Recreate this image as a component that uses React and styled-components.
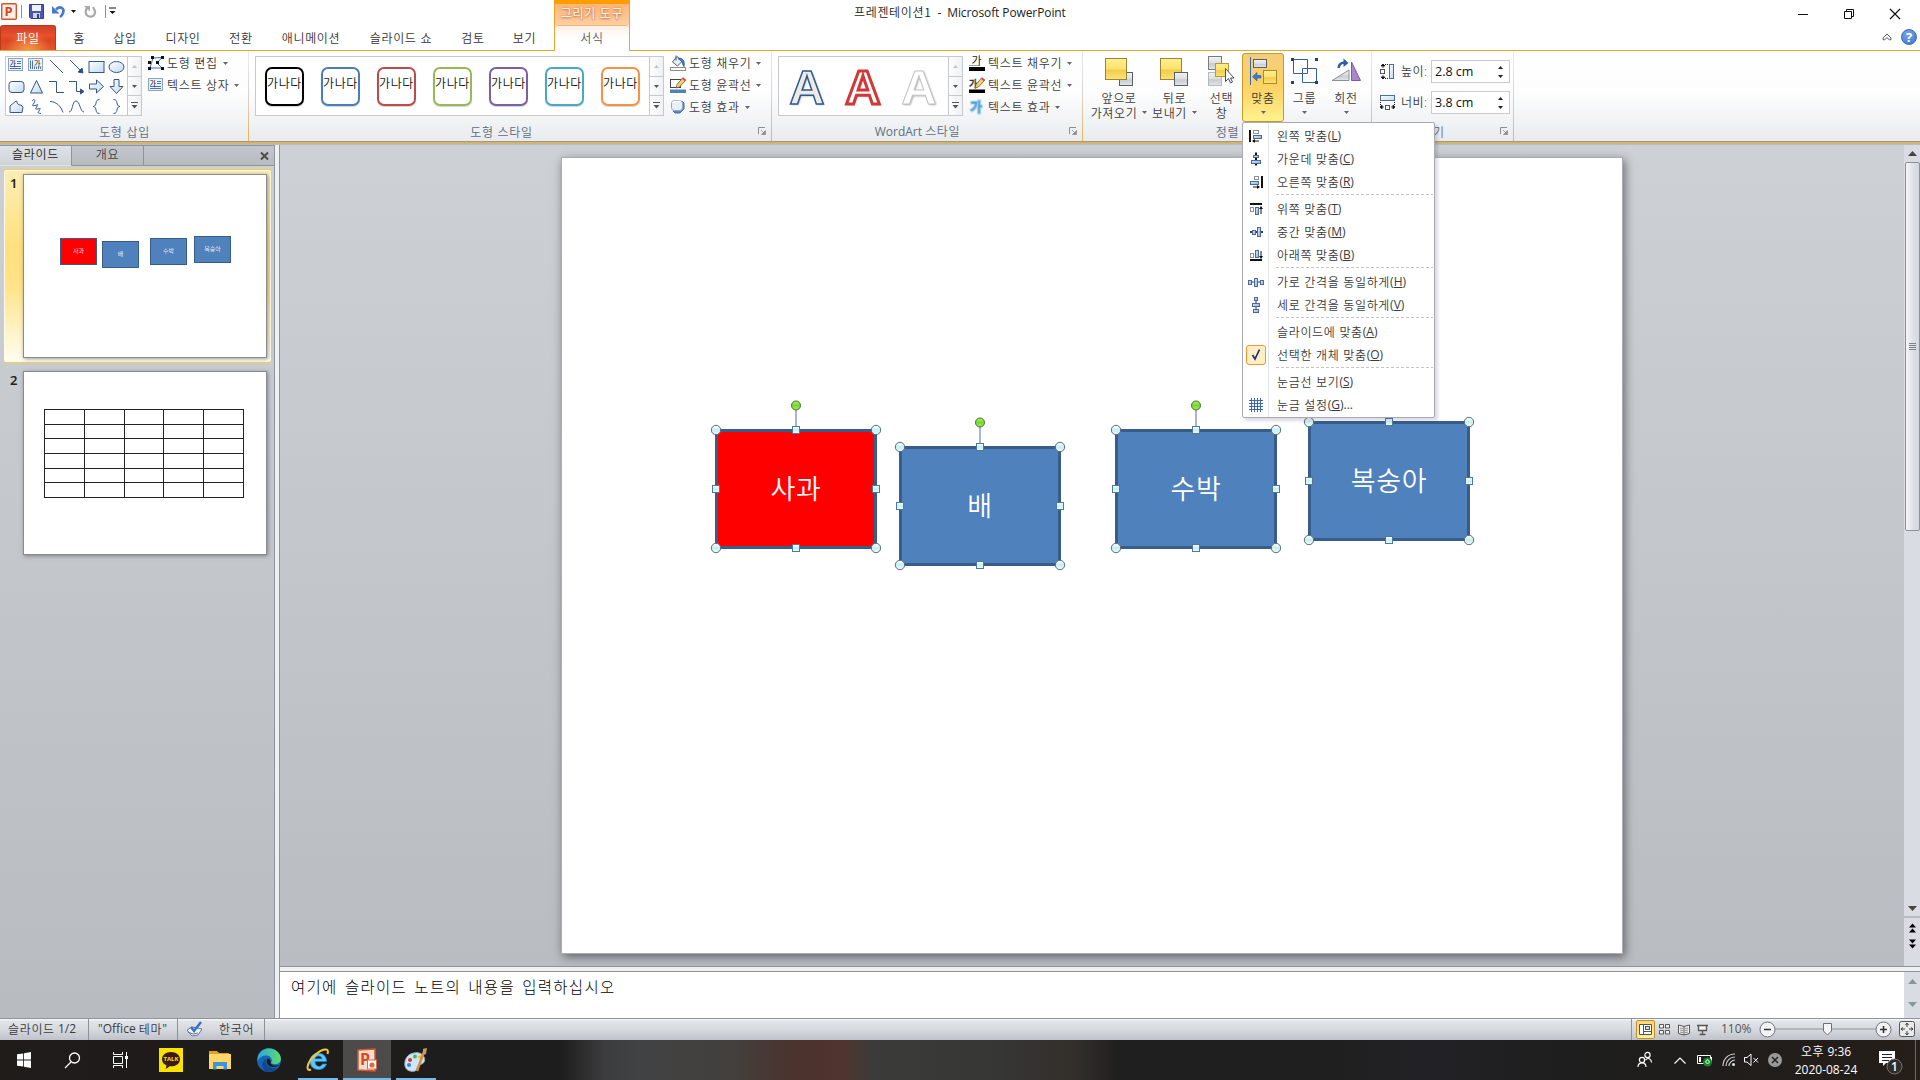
import React from 'react';
import styled, { createGlobalStyle, css } from 'styled-components';

const GlobalStyle = createGlobalStyle`
  * {
    box-sizing: border-box;
  }

  body {
    margin: 0;
    overflow: hidden;
    font-family: 'Open Sans', 'Noto Sans CJK KR', sans-serif;
    font-size: 12px;
    line-height: 16px;
    color: #3b3b3b;
  }

  svg {
    display: block;
    flex: none;
    overflow: visible;
  }
`;

const Window = styled.div`
  width: 1920px;
  height: 1080px;
  display: flex;
  flex-direction: column;
  background: #fff;
`;

const Ko = styled.span`
  font-family: 'Noto Sans CJK KR', sans-serif;
  font-weight: 350;
  letter-spacing: 0.65px;
  word-spacing: 0.6px;
  white-space: nowrap;
`;

/* ---------- title bar ---------- */

const TopArea = styled.header`
  position: relative;
  height: 51px;
  display: flex;
  flex-direction: column;
  border-bottom: 1px solid #f2a32c;
`;

const TitleBar = styled.div`
  height: 25px;
  display: flex;
  align-items: center;
  justify-content: space-between;
`;

const QuickAccess = styled.div`
  width: 554px;
  display: flex;
  align-items: center;
  padding: 0 0 2px 1px;
`;

const QuickDivider = styled.i`
  width: 1px;
  height: 13px;
  background: #8f8f8f;
  margin: 0 ${(p) => p.$right || 0}px 0 ${(p) => p.$left || 0}px;
`;

const DocTitle = styled.div`
  flex: 1;
  padding: 1px 0 0 300px;
  color: #1d1d1d;
  letter-spacing: -0.1px;
  white-space: pre;
`;

const WindowButtons = styled.div`
  display: flex;
  align-items: center;
  padding: 4px 17px 0 0;
  gap: 30px;
`;

const TabRow = styled.nav`
  height: 26px;
  display: flex;
  align-items: stretch;
`;

const Tab = styled.div`
  width: ${(p) => p.$width}px;
  display: flex;
  align-items: center;
  justify-content: center;
  padding-top: 1px;
  color: #333;
`;

const FileTab = styled(Tab)`
  color: #fff;
  border: 1px solid #b93a17;
  border-bottom: none;
  border-radius: 3px 3px 0 0;
  background:
    radial-gradient(ellipse at 50% 110%, #f7a04a 0%, rgba(247, 160, 74, 0) 60%),
    linear-gradient(#d0402b 0%, #e8502b 40%, #dc4424 60%, #e2552e 100%);
`;

const ContextTab = styled.div`
  position: absolute;
  left: 554px;
  top: 0;
  width: 76px;
  height: 51px;
  border-top: 4px solid #ff9d00;
  border-left: 1px solid #f2a32c;
  border-right: 1px solid #f2a32c;
  background: #fff;
`;

const ContextTitle = styled.div`
  height: 21px;
  padding-top: 1px;
  text-align: center;
  color: #fff;
  text-shadow: 0 0 3px #c2703a, 0 1px 2px #c2703a;
  background: linear-gradient(#fbb676, #fdcfa5);
`;

const ContextLabel = styled.div`
  height: 26px;
  padding-top: 4px;
  text-align: center;
  color: #555c68;
  border-top: 1px solid #f2b765;
  border-radius: 3px 3px 0 0;
  background: linear-gradient(#fdf0e8, #fff 50%);
`;

const RibbonCorner = styled.div`
  margin-left: auto;
  display: flex;
  align-items: center;
  gap: 9px;
  padding: 0 3px 1px 0;
`;

const HelpBadge = styled.div`
  width: 16px;
  height: 16px;
  border-radius: 50%;
  border: 1px solid #3b6cbc;
  background: radial-gradient(circle at 40% 30%, #79a6ea, #3c73cf);
  color: #fff;
  font-weight: bold;
  font-size: 13px;
  line-height: 14px;
  text-align: center;
`;

/* ---------- ribbon ---------- */

const Ribbon = styled.section`
  position: relative;
  z-index: 5;
  height: 94px;
  display: flex;
  background: linear-gradient(#fff 0%, #fdfdfd 45%, #f1f3f5 75%, #e9ecef 96%);
  border-bottom: 1px solid #b9bcc0;
  box-shadow: inset 0 -1px #ceb47d, inset 0 -2px #d9b25d, inset 0 -3px #a39883;
`;

const Group = styled.div`
  position: relative;
  width: ${(p) => p.$width}px;
  height: 91px;
  display: flex;
  flex-direction: column;

  &::after {
    content: '';
    position: absolute;
    right: 0;
    top: 0;
    width: 1px;
    height: 90px;
    background: linear-gradient(#ebebeb, #d6d4d0 50%, #ecb34d);
  }
`;

const GroupBody = styled.div`
  height: 71px;
  display: flex;
  padding-left: ${(p) => p.$left}px;
`;

const GroupFooter = styled.div`
  height: 19px;
  display: flex;
  align-items: center;
  justify-content: center;
  color: #606b7c;
  padding-right: ${(p) => p.$shift || 0}px;
`;

const Launcher = styled.div`
  position: absolute;
  right: 6px;
  bottom: 7px;
`;

const Gallery = styled.div`
  margin-top: 5px;
  width: ${(p) => p.$width}px;
  height: 60px;
  display: flex;
  background: #fff;
  border: 1px solid #c6c9ce;
`;

const GalleryScroll = styled.div`
  width: 14px;
  margin-left: auto;
  display: flex;
  flex-direction: column;
  border-left: 1px solid #c6c9ce;
  background: linear-gradient(90deg, #fdfdfd, #eff1f3);
`;

const ScrollStep = styled.div`
  flex: 1;
  display: flex;
  align-items: center;
  justify-content: center;

  & + & {
    border-top: 1px solid #c6c9ce;
  }
`;

const ShapeGrid = styled.div`
  display: grid;
  grid-template-columns: repeat(6, 20px);
  grid-template-rows: repeat(3, 20px);
  place-items: center;
  margin-top: -1px;
`;

const StyleRow = styled.div`
  flex: 1;
  display: flex;
  gap: 17px;
  padding: 10px 0 0 9px;
`;

const StyleSwatch = styled.div`
  width: 39px;
  height: 39px;
  display: flex;
  justify-content: center;
  padding-top: 6px;
  border: 2px solid ${(p) => p.$color};
  border-radius: 7px;
  box-shadow: 0 1px 1px rgba(0, 0, 0, 0.18);
  color: #111;
  white-space: nowrap;
`;

const WordArtRow = styled.div`
  flex: 1;
  display: flex;
  align-items: center;
  gap: 22px;
  padding: 2px 0 0 11px;
`;

const WordArtLetter = styled.span`
  width: 34px;
  display: flex;
  justify-content: center;
  font-family: 'Liberation Sans', sans-serif;
  font-weight: bold;
  font-size: 49px;
  line-height: 56px;
  color: ${(p) => p.$fill};
  -webkit-text-stroke: ${(p) => p.$stroke}px ${(p) => p.$line};
  text-shadow: 1px 1px 2px rgba(0, 0, 0, 0.35);
`;

const CommandList = styled.div`
  margin-left: ${(p) => p.$left}px;
  padding-top: ${(p) => p.$top || 1}px;
`;

const CommandRow = styled.div`
  height: 22px;
  display: flex;
  align-items: center;
  gap: 3px;
  white-space: nowrap;
`;

const CommandArrow = styled.span`
  margin-left: 2px;
`;

const LargeButton = styled.div`
  position: relative;
  width: ${(p) => p.$width}px;
  height: 69px;
  margin-top: 2px;
  padding-top: 4px;
  display: flex;
  flex-direction: column;
  align-items: center;
  border: 1px solid transparent;
  border-radius: 3px;
  line-height: 15px;

  ${(p) =>
    p.$active &&
    css`
      border-color: #c29b29;
      background: linear-gradient(#f4cd7a, #fed163 45%, #ffda6f 65%, #fff391);
    `}
`;

const LargeIcon = styled.div`
  height: 32px;
  display: flex;
  align-items: flex-start;
`;

const LargeCaption = styled.div`
  height: 15px;
  display: flex;
  align-items: center;
  gap: 5px;
  white-space: nowrap;
`;

const SizeRow = styled.label`
  height: 31px;
  display: flex;
  align-items: center;
`;

const SizeName = styled.span`
  width: 30px;
  margin-left: 6px;
  font-weight: 350;
  letter-spacing: 0.4px;
  white-space: nowrap;
`;

const SizeBox = styled.div`
  width: 79px;
  height: 23px;
  display: flex;
  align-items: center;
  justify-content: space-between;
  padding: 0 6px 0 3px;
  background: #fff;
  border: 1px solid #c9cbce;
  color: #111;
  font-size: 12.5px;
`;

/* ---------- align menu ---------- */

const Menu = styled.div`
  position: absolute;
  left: -1px;
  top: 68px;
  z-index: 10;
  width: 193px;
  padding: 1px 1px 1px 0;
  background: linear-gradient(90deg, #fff 25px, #e2e4e7 25px, #e2e4e7 26px, #fff 26px);
  border: 1px solid #a7abb0;
  border-radius: 2px;
  box-shadow: 3px 3px 3px rgba(70, 60, 110, 0.18);
`;

const MenuItem = styled.div`
  height: 23px;
  display: flex;
  align-items: center;
  white-space: nowrap;
`;

const MenuIcon = styled.div`
  width: 26px;
  display: flex;
  justify-content: center;
  margin-right: 8px;
`;

const MenuCheck = styled.div`
  width: 20px;
  height: 20px;
  display: flex;
  align-items: center;
  justify-content: center;
  border: 1px solid #f29536;
  border-radius: 3px;
  background: #fdeec3;
`;

const MenuLine = styled.div`
  height: 4px;
  margin-left: 33px;
  background: repeating-linear-gradient(90deg, #c5c5c5 0 3px, transparent 3px 5px) 0 1px / 100% 1px no-repeat;
`;

/* ---------- work area ---------- */

const WorkArea = styled.main`
  height: 873px;
  display: flex;
`;

const SidePane = styled.aside`
  width: 275px;
  border-right: 1px solid #8e949b;
  background: linear-gradient(#cdd0d5, #b8bbc0);
`;

const PaneTabs = styled.div`
  height: 21px;
  display: flex;
  border-top: 1px solid #8e949b;
  background: linear-gradient(#c3c7cd, #b7bbc0);
`;

const PaneTab = styled.div`
  width: ${(p) => p.$width}px;
  text-align: center;
  border-right: 1px solid #8e949b;
  border-bottom: 1px solid ${(p) => (p.$active ? 'transparent' : '#8e949b')};
  background: ${(p) => (p.$active ? 'linear-gradient(#dfe2e6, #cfd2d7)' : 'none')};
  color: ${(p) => (p.$active ? '#222' : '#444')};
`;

const PaneClose = styled.div`
  flex: 1;
  display: flex;
  align-items: center;
  justify-content: flex-end;
  padding-right: 5px;
  border-bottom: 1px solid #8e949b;
`;

const ThumbRow = styled.div`
  width: 269px;
  height: 194px;
  margin: ${(p) => p.$top}px 0 0 3px;
  padding: 4px 0 0 4px;
  display: flex;
  border: 1px solid transparent;
  border-radius: 3px;

  ${(p) =>
    p.$active &&
    css`
      border-color: #f7cd55;
      box-shadow: inset 0 0 0 1px #fffbe8;
      background: linear-gradient(#fdeeb4, #ffe07f 40%, #ffe388 60%, #fffdf0 100%);
    `}
`;

const ThumbNumber = styled.div`
  width: 15px;
  padding: 1px 0 0 2px;
  font-family: 'Noto Sans', sans-serif;
  font-weight: 600;
  font-size: 13px;
  color: #222;
`;

const Thumb = styled.div`
  position: relative;
  width: 244px;
  height: 184px;
  background: #fff;
  border: 1px solid #888c92;
  box-shadow: 1px 1px 4px rgba(60, 60, 60, 0.5);
`;

const ThumbShape = styled.div`
  position: absolute;
  left: ${(p) => p.$x}px;
  top: ${(p) => p.$y}px;
  width: 37px;
  height: 27px;
  display: flex;
  align-items: center;
  justify-content: center;
  padding-bottom: 2px;
  background: ${(p) => p.$fill};
  border: 1px solid #385d8a;
  color: rgba(255, 255, 255, 0.85);
  font-size: 6px;
  line-height: 8px;
`;

const ThumbTable = styled.div`
  width: 200px;
  height: 89px;
  margin: 37px 0 0 20px;
  display: grid;
  grid-template-columns: repeat(5, 1fr);
  grid-template-rows: repeat(6, 1fr);
  border: 1px solid #222;
  border-width: 1px 0 0 1px;
`;

const ThumbCell = styled.div`
  border: 1px solid #222;
  border-width: 0 1px 1px 0;
`;

const Splitter = styled.div`
  width: 4px;
  background: #eef0f2;
`;

const EditorColumn = styled.div`
  flex: 1;
  display: flex;
  flex-direction: column;
  border-left: 1px solid #8e949b;
`;

const CanvasRow = styled.div`
  flex: none;
  height: 822px;
  display: flex;
  border-bottom: 1px solid #8e949b;
`;

const Canvas = styled.div`
  flex: 1;
  padding: 12px 0 0 281px;
  background: linear-gradient(#cdd0d4, #b9bcc0);
`;

const Slide = styled.div`
  position: relative;
  width: 1062px;
  height: 797px;
  background: #fff;
  border: 1px solid #a9adb3;
  box-shadow: 2px 3px 9px rgba(50, 55, 60, 0.65);
`;

const SlideShape = styled.div`
  position: absolute;
  left: ${(p) => p.$x}px;
  top: ${(p) => p.$y}px;
  width: 162px;
  height: 120px;
  display: flex;
  align-items: center;
  justify-content: center;
  padding-bottom: 2px;
  background: ${(p) => p.$fill};
  border: 3px solid #385d8a;
  color: #fff;
  font-family: 'Noto Sans CJK KR', sans-serif;
  font-weight: 350;
  font-size: 27px;
  line-height: 40px;
  letter-spacing: 0.6px;
`;

const Selection = styled.svg`
  position: absolute;
  left: -12px;
  top: -36px;
`;

const ScrollBar = styled.div`
  width: 16px;
  display: flex;
  flex-direction: column;
  align-items: center;
  background: #d9dce2;
`;

const ScrollArrow = styled.div`
  flex: none;
  height: ${(p) => p.$height}px;
  display: flex;
  align-items: center;
`;

const ScrollThumb = styled.div`
  width: 15px;
  height: 369px;
  margin-bottom: auto;
  display: flex;
  flex-direction: column;
  align-items: center;
  justify-content: center;
  gap: 1px;
  border: 1px solid #8b919b;
  border-radius: 2px;
  background: linear-gradient(90deg, #f4f5f8, #dcdfe5 60%, #d3d7df);
`;

const Grip = styled.i`
  width: 7px;
  height: 1px;
  background: #7b828c;
`;

const ScrollExtras = styled.div`
  width: 16px;
  height: 50px;
  padding-top: 5px;
  display: flex;
  flex-direction: column;
  align-items: center;
  gap: 6px;
  border-top: 2px solid #b9bcc2;
`;

const NotesGap = styled.div`
  flex: none;
  height: 4px;
  background: #eef0f2;
`;

const NotesRow = styled.div`
  flex: 1;
  display: flex;
  border-top: 1px solid #8e949b;
`;

const Notes = styled.div`
  flex: 1;
  padding: 4px 0 0 11px;
  background: #fff;
  color: #000;
  font-size: 15.500px;
  line-height: 20px;
`;

const NotesText = styled.span`
  font-family: 'Noto Sans CJK KR', sans-serif;
  font-weight: 300;
  letter-spacing: 1.3px;
  word-spacing: 2.5px;
`;

/* ---------- status bar ---------- */

const StatusBar = styled.footer`
  height: 22px;
  display: flex;
  align-items: center;
  border-top: 1px solid #8e949b;
  background: linear-gradient(#fafbfc 0, #e1e4e8 2px, #d6d9de 50%, #bfc3c9);
`;

const StatusCell = styled.div`
  width: ${(p) => p.$width}px;
  height: 21px;
  display: flex;
  align-items: center;
  padding: 0 0 1px ${(p) => p.$left}px;
  border-right: 1px solid #8d9299;
  white-space: nowrap;
`;

const StatusRight = styled.div`
  margin-left: auto;
  height: 21px;
  width: 289px;
  display: flex;
  align-items: center;
  padding-left: 4px;
  border-left: 1px solid #8d9299;
`;

const ViewButton = styled.div`
  width: 19px;
  height: 19px;
  display: flex;
  align-items: center;
  justify-content: center;
  border: 1px solid ${(p) => (p.$active ? '#c58e2b' : 'transparent')};
  border-radius: 2px;
  background: ${(p) => (p.$active ? 'linear-gradient(#fcd77b, #fff09a)' : 'none')};
`;

const ZoomValue = styled.span`
  width: 41px;
  margin-left: 9px;
  padding-bottom: 1px;
  color: #555;
`;

/* ---------- task bar ---------- */

const TaskBar = styled.div`
  height: 40px;
  display: flex;
  background: linear-gradient(
    90deg,
    #1f1c1a 0,
    #1d1d1d 560px,
    #3d3d3f 605px,
    #414243 640px,
    #43403d 735px,
    #4c322d 795px,
    #4f352e 845px,
    #3b3b39 872px,
    #363634 1000px,
    #332e2a 1075px,
    #1f1f1f 1120px,
    #1f1f1f 1320px,
    #222226 1430px,
    #1e1e1e 1560px,
    #1f1d1b 1700px,
    #251e19
  );
`;

const TaskSlot = styled.div`
  width: ${(p) => p.$width || 48}px;
  height: 40px;
  display: flex;
  align-items: center;
  justify-content: center;
  background: ${(p) => (p.$active ? '#4d4b4a' : 'none')};
  box-shadow: ${(p) => (p.$open ? 'inset 0 -2px #76b9ed' : 'none')};
  margin: 0 ${(p) => p.$gap || 0}px 0 ${(p) => p.$before || 0}px;
`;

const Tray = styled.div`
  margin-left: auto;
  width: 283px;
  display: flex;
  align-items: center;
`;

const TrayItem = styled.div`
  margin-left: ${(p) => p.$left}px;
`;

const Clock = styled.div`
  width: 72px;
  margin-left: 8px;
  text-align: center;
  color: #fff;
  line-height: 18px;
`;

const ShowDesktop = styled.i`
  width: 5px;
  height: 40px;
  margin-left: auto;
  border-left: 1px solid #6b6866;
`;

/* ---------- drawings ---------- */

const Arrow = ({ w = 5, up, color = '#666' }) => (
  <svg width={w} height={Math.ceil(w / 2)} viewBox={`0 0 ${w} ${Math.ceil(w / 2)}`}>
    <path d={up ? `M0 ${Math.ceil(w / 2)}H${w}L${w / 2} 0Z` : `M0 0H${w}L${w / 2} ${Math.ceil(w / 2)}Z`} fill={color} />
  </svg>
);

const LauncherIcon = () => (
  <svg width="8" height="8" viewBox="0 0 8 8">
    <path d="M0.5 7V0.5H7" fill="none" stroke="#8b8f95" />
    <path d="M3 3L6 6M7.5 3.5V7.5H3.5Z" stroke="#8b8f95" fill="#8b8f95" strokeWidth="0.8" />
  </svg>
);

const ScrollSteps = () => (
  <GalleryScroll>
    <ScrollStep><Arrow up color="#c3c3c3" /></ScrollStep>
    <ScrollStep><Arrow color="#555" /></ScrollStep>
    <ScrollStep>
      <svg width="7" height="7" viewBox="0 0 7 7">
        <path d="M0 .5H7" stroke="#555" />
        <path d="M0.5 3H6.5L3.5 6.5Z" fill="#555" />
      </svg>
    </ScrollStep>
  </GalleryScroll>
);

const TextBoxIcon = ({ vertical }) => (
  <svg width="16" height="14" viewBox="0 0 16 14">
    <rect x=".5" y=".5" width="14" height="12" fill="#eaf1f9" stroke="#8ba3c2" />
    <path
      d={vertical ? 'M2.500 2.500V11M4.500 2.500V11M6.500 8.500V11M8.500 8.500V11M10.500 8.500V11M12.500 8.500V11' : 'M9 3.500H13M9 5.500H13M2 8.500H13M2 10.500H13'}
      stroke="#4c76ab"
    />
    <text x={vertical ? 6 : 1.5} y="7.500" fontSize="7" fill="#111">가</text>
  </svg>
);

const shapeIcons = [
  <TextBoxIcon />,
  <TextBoxIcon vertical />,
  <path d="M2 2L15 15" />,
  <g><path d="M2 2L13 13" /><path d="M15 15L10 14L14 10Z" fill="#2c4a75" /></g>,
  <rect x="1" y="3.500" width="15" height="11" fill="url(#shapeFill)" />,
  <ellipse cx="8.500" cy="9" rx="7.500" ry="5.500" fill="url(#shapeFill)" />,
  <rect x="1" y="3.500" width="15" height="11" rx="3" fill="url(#shapeFill)" />,
  <path d="M8.500 2.500L14.500 15H2.500Z" fill="url(#shapeFill)" />,
  <path d="M1 3.500H8.500V14.500H16" />,
  <g><path d="M1 3.500H8.500V13.500H13" /><path d="M16 13.500L12.500 11V16Z" fill="#2c4a75" /></g>,
  <path d="M1.500 6H8.500V2L15.500 8.500L8.500 15V11H1.500Z" fill="url(#shapeFill)" />,
  <path d="M6 1.500H11V8.500H15L8.500 15.500L2 8.500H6Z" fill="url(#shapeFill)" />,
  <path d="M2 14.500V8L8 3L9 3.500C9 6 10.500 7 13 7L15 9.500L14 14.500Z" fill="url(#shapeFill)" />,
  <path d="M4 3C6 0 8 2 6 5S4 8 7 7.500S10 5 9 8S6 11 9 11S13 9 11.500 12S9 15 13 15.500" />,
  <path d="M2 3.500C8 3.500 13 8 15 14.500" />,
  <path d="M1 14C5 14 4 3 8 3S12 14 16 14" />,
  <path d="M11.500 1.500C6 1.500 10 8 5 8.500C10 9 6 15.500 11.500 15.500" />,
  <path d="M5.500 1.500C11 1.500 7 8 12 8.500C7 9 11 15.500 5.500 15.500" />,
];

const ShapeIcon = ({ children }) => (
  <svg width="17" height="17" viewBox="0 0 17 17" fill="none" stroke="#35578a">
    {children}
  </svg>
);

const Defs = styled.svg`
  position: absolute;
`;

const SharedDefs = () => (
  <Defs width="0" height="0">
    <defs>
      <linearGradient id="shapeFill" x1="0" y1="0" x2="1" y2="1">
        <stop offset="0" stopColor="#fff" />
        <stop offset="1" stopColor="#c2daf0" />
      </linearGradient>
      <linearGradient id="barFill" x1="0" y1="0" x2="1" y2="1">
        <stop offset="0" stopColor="#dce9f8" />
        <stop offset="1" stopColor="#8db0dc" />
      </linearGradient>
      <linearGradient id="yellowFill" x1="0" y1="0" x2="0" y2="1">
        <stop offset="0" stopColor="#fdf08e" />
        <stop offset="0.5" stopColor="#fbe26c" />
        <stop offset="0.55" stopColor="#f0cb4e" />
        <stop offset="1" stopColor="#fbe573" />
      </linearGradient>
      <linearGradient id="grayFill" x1="0" y1="0" x2="0" y2="1">
        <stop offset="0" stopColor="#f2f3f4" />
        <stop offset="0.5" stopColor="#dcdee1" />
        <stop offset="0.55" stopColor="#c8cbcf" />
        <stop offset="1" stopColor="#e4e6e9" />
      </linearGradient>
      <linearGradient id="handleFill" x1="0" y1="0" x2="0" y2="1">
        <stop offset="0" stopColor="#fff" />
        <stop offset="0.5" stopColor="#c5eef0" />
        <stop offset="1" stopColor="#f0fdfd" />
      </linearGradient>
      <linearGradient id="greenFill" x1="0" y1="0" x2="0" y2="1">
        <stop offset="0" stopColor="#b4f56c" />
        <stop offset="0.5" stopColor="#74d92b" />
        <stop offset="1" stopColor="#a4f25b" />
      </linearGradient>
      <linearGradient id="edgeFill" x1="0" y1="0" x2="1" y2="0">
        <stop offset="0" stopColor="#2ba8dd" />
        <stop offset="1" stopColor="#5ddc6b" />
      </linearGradient>
    </defs>
  </Defs>
);

const EditShapeIcon = () => (
  <svg width="16" height="14" viewBox="0 0 16 14">
    <path d="M5 2L14 1.500L9 7L14 12H2Z" fill="none" stroke="#3f6fb5" />
    <path d="M3 0h3v3h-3zM13 0h3v3h-3zM8 5h3v3h-3zM0 5h3v3h-3zM0 11h3v3h-3zM13 11h3v3h-3z" fill="#111" />
  </svg>
);

const FillIcon = () => (
  <svg width="16" height="16" viewBox="0 0 16 16">
    <path d="M2.500 7L7 1.500L12.500 6L7.500 11Z" fill="#e8f0fa" stroke="#4c5f7d" />
    <path d="M6 0.500V5.500M8 3.500C12 2.500 15 5 14 11.500C12.500 9.500 12.500 7.500 11.500 6Z" stroke="#2f5ea3" fill="#4f7fc6" />
    <rect x=".5" y="12.500" width="15" height="3" fill="#fff" stroke="#8c8c8c" />
  </svg>
);

const PencilIcon = ({ text, bar }) => (
  <svg width="16" height="16" viewBox="0 0 16 16">
    {text ? (
      <text x="0" y="9.500" fontSize="9" fill="#fff" stroke="#333" strokeWidth=".6">가</text>
    ) : (
      <rect x=".5" y="2.500" width="10" height="8" fill="#fff" stroke="#444" />
    )}
    <path d="M6 11L7 7.500L12.500 1L15.500 3.500L9.500 10Z" fill="#f2d16b" stroke="#6d5a2e" strokeWidth=".8" />
    <path d="M12.500 1L15.500 3.500" stroke="#c9504b" strokeWidth="2" />
    <rect y="12.500" width="16" height="3.500" fill={bar} />
  </svg>
);

const EffectIcon = () => (
  <svg width="16" height="16" viewBox="0 0 16 16">
    <path d="M3 12L5 14H10L14 10V4L12 2" fill="#5f86c0" stroke="#486ea9" />
    <rect x="1.500" y="1.500" width="11" height="10" rx="3" fill="#e9f0fa" stroke="#8fa9cd" />
    <path d="M3 4C3 3 4 2.500 5 2.500H11" stroke="#fff" strokeWidth="1.500" fill="none" />
  </svg>
);

const TextFillIcon = () => (
  <svg width="16" height="16" viewBox="0 0 16 16">
    <text x="2.500" y="10" fontSize="11" fill="#222">가</text>
    <path d="M0 10.500H11" stroke="#777" strokeWidth=".7" />
    <rect y="12" width="16" height="4" fill="#000" />
  </svg>
);

const TextEffectIcon = () => (
  <svg width="16" height="16" viewBox="0 0 16 16">
    <text x="1.500" y="12.500" fontSize="12" fill="#fff" stroke="#a9d6f5" strokeWidth="3">가</text>
    <text x="1.500" y="12.500" fontSize="12" fill="#fff" stroke="#4f9bd6" strokeWidth=".8">가</text>
  </svg>
);

const BringFrontIcon = () => (
  <svg width="29" height="29" viewBox="0 0 29 29">
    <rect x="14.500" y="14.500" width="13" height="13" fill="url(#grayFill)" stroke="#5b6068" />
    <rect x=".5" y=".5" width="21" height="21" fill="url(#yellowFill)" stroke="#9a8438" />
  </svg>
);

const SendBackIcon = () => (
  <svg width="29" height="29" viewBox="0 0 29 29">
    <rect x=".5" y=".5" width="21" height="21" fill="url(#yellowFill)" stroke="#9a8438" />
    <rect x="14.500" y="14.500" width="13" height="13" fill="url(#grayFill)" stroke="#5b6068" />
  </svg>
);

const SelectPaneIcon = () => (
  <svg width="28" height="31" viewBox="0 0 28 31">
    <rect x=".5" y="-1.500" width="13" height="13" fill="url(#grayFill)" stroke="#777c84" />
    <rect x=".5" y="14.500" width="13" height="13" fill="url(#grayFill)" stroke="#b6b9be" />
    <rect x="7.500" y="5.500" width="13" height="13" fill="url(#yellowFill)" stroke="#b39a3d" />
    <path d="M17.500 10.500V23.500L20.500 20.500L22.500 25L24.500 24L22.500 20H26Z" fill="#fff" stroke="#44536b" />
  </svg>
);

const AlignIcon = () => (
  <svg width="29" height="30" viewBox="0 0 29 30">
    <path d="M1.500 -1V27" stroke="#3768b0" />
    <rect x="4.500" y="1.500" width="13" height="8" fill="url(#grayFill)" stroke="#5b6068" />
    <rect x="14.500" y="12.500" width="13" height="13" fill="url(#yellowFill)" stroke="#a58c33" />
    <path d="M12 17.500V20H8V23L3.500 18.700L8 14.500V17.500Z" fill="#3d79d1" stroke="#2a5ba8" strokeWidth=".6" />
  </svg>
);

const GroupIcon = () => (
  <svg width="27" height="28" viewBox="0 0 27 28">
    <path d="M2.500 1.500H16.500V15.500H2.500ZM11.500 10.500H25.500V24.500H11.500Z" fill="none" stroke="#35609f" />
    <path d="M0 0h3v3h-3zM24 0h3v3h-3zM0 23h3v3h-3zM24 23h3v3h-3z" fill="#1f3f78" />
  </svg>
);

const RotateIcon = () => (
  <svg width="31" height="25" viewBox="0 0 31 25">
    <path d="M1 22.500L18 12V22.500Z" fill="url(#grayFill)" stroke="#8a9099" />
    <path d="M20.500 4V22.500H29.500Z" fill="#a988c9" stroke="#7a5da0" />
    <path d="M7.500 10C8 6 10 4.500 14 4.500" fill="none" stroke="#2c5ea6" strokeWidth="2.500" />
    <path d="M12.500 0.500L17.500 5L12.500 9Z" fill="#2c5ea6" />
  </svg>
);

const HeightIcon = () => (
  <svg width="15" height="17" viewBox="0 0 15 17">
    <rect x="9.500" y="1.500" width="4" height="14" fill="url(#shapeFill)" stroke="#4c6f9f" />
    <rect x=".5" y="6.500" width="4" height="4" fill="#fff" stroke="#555" />
    <path d="M3 1L1 3H5ZM3 16L1 14H5ZM3 1V5M3 12V16" fill="#111" stroke="#111" strokeWidth=".8" />
    <path d="M5 1.500H8M5 15.500H8" stroke="#111" strokeDasharray="1 1" />
  </svg>
);

const WidthIcon = () => (
  <svg width="15" height="15" viewBox="0 0 15 15">
    <rect x=".5" y=".5" width="14" height="5" fill="url(#shapeFill)" stroke="#4c6f9f" />
    <rect x="5.500" y="10.500" width="4" height="4" fill="#fff" stroke="#555" />
    <path d="M0 12L2 10V14ZM15 12L13 10V14ZM1 12H4M11 12H14" fill="#111" stroke="#111" strokeWidth=".8" />
    <path d="M.5 7V10M14.500 7V10" stroke="#111" strokeDasharray="1 1" />
  </svg>
);

const Spinner = () => (
  <svg width="5" height="14" viewBox="0 0 5 14">
    <path d="M0 4H5L2.500 1ZM0 10H5L2.500 13Z" fill="#222" />
  </svg>
);

const box = { fill: 'url(#barFill)', stroke: '#4a6a98' };
const greyBox = { fill: '#fff', stroke: '#8b929c' };

const menuDrawings = {
  left: <g><path d="M2 2V14" stroke="#111" strokeWidth="2" /><rect x="5.500" y="2.500" width="5" height="3" {...greyBox} /><rect x="5.500" y="7.500" width="8" height="3" {...box} /><path d="M5 13H11" stroke="#111" /><path d="M4 13L7 11V15Z" fill="#111" /></g>,
  center: <g><path d="M8 1.500V14.500" stroke="#111" strokeWidth="2" /><rect x="5.500" y="4.500" width="5" height="2" {...box} /><rect x="3.500" y="9.500" width="9" height="3" {...box} /></g>,
  right: <g><path d="M14 2V14" stroke="#111" strokeWidth="2" /><rect x="6.500" y="2.500" width="4" height="3" {...greyBox} /><rect x="2.500" y="7.500" width="8" height="3" {...box} /><path d="M5 13H11" stroke="#111" /><path d="M12 13L9 11V15Z" fill="#111" /></g>,
  top: <g><path d="M2 3H14" stroke="#111" strokeWidth="2" /><rect x="2.500" y="6.500" width="3" height="4" {...greyBox} /><rect x="7.500" y="6.500" width="3" height="7" {...box} /><path d="M13 7V13" stroke="#111" /><path d="M13 5L11 8H15Z" fill="#111" /></g>,
  middle: <g><path d="M2 8H15" stroke="#111" strokeWidth="1.600" /><rect x="4.500" y="6.500" width="3" height="4" {...box} /><rect x="9.500" y="3.500" width="3" height="9" {...box} /></g>,
  bottom: <g><path d="M2 13H14" stroke="#111" strokeWidth="2" /><rect x="2.500" y="6.500" width="3" height="4" {...greyBox} /><rect x="7.500" y="3.500" width="3" height="7" {...box} /><path d="M13 4V9" stroke="#111" /><path d="M13 12L11 9H15Z" fill="#111" /></g>,
  horizontal: <g><path d="M3 8H14" stroke="#333" /><rect x=".5" y="6.500" width="3" height="4" {...box} /><rect x="6.500" y="4.500" width="3" height="8" {...box} /><rect x="12.500" y="6.500" width="3" height="4" {...box} /></g>,
  vertical: <g><path d="M8 3V14" stroke="#333" /><rect x="6.500" y=".5" width="3" height="3" {...box} /><rect x="4.500" y="6.500" width="7" height="3" {...box} /><rect x="5.500" y="12.500" width="5" height="3" {...box} /></g>,
  grid: <path d="M3.500 1V15M6.500 1V15M9.500 1V15M12.500 1V15M1 3.500H15M1 6.500H15M1 9.500H15M1 12.500H15" stroke="#3c67b5" />,
};

const MenuDrawing = ({ name }) => (
  <svg width="16" height="16" viewBox="0 0 16 16" fill="none">
    {menuDrawings[name]}
  </svg>
);

const SelectionFrame = () => (
  <Selection width="180" height="160" viewBox="0 0 180 160">
    <path d="M90 12V34" stroke="#4c6f9f" />
    <circle cx="90" cy="9.500" r="4.500" fill="url(#greenFill)" stroke="#47683a" />
    {[[10, 34], [170, 34], [10, 152], [170, 152]].map(([x, y]) => (
      <circle key={`${x}-${y}`} cx={x} cy={y} r="4.700" fill="url(#handleFill)" stroke="#5c6a75" />
    ))}
    {[[90, 34], [90, 152], [10, 93], [170, 93]].map(([x, y]) => (
      <rect key={`${x}-${y}`} x={x - 3.5} y={y - 3.5} width="7" height="7" fill="url(#handleFill)" stroke="#4f779b" />
    ))}
  </Selection>
);

/* ---------- data ---------- */

const tabs = [
  ['홈', 46], ['삽입', 46], ['디자인', 70], ['전환', 46], ['애니메이션', 94],
  ['슬라이드 쇼', 86], ['검토', 58], ['보기', 45],
];

const outlineColors = ['#000', '#4a7ebb', '#be4b48', '#98b954', '#7d60a0', '#46aac5', '#f69240'];

const menuItems = [
  { icon: 'left', label: '왼쪽 맞춤', hotkey: 'L' },
  { icon: 'center', label: '가운데 맞춤', hotkey: 'C' },
  { icon: 'right', label: '오른쪽 맞춤', hotkey: 'R' },
  { line: true },
  { icon: 'top', label: '위쪽 맞춤', hotkey: 'T' },
  { icon: 'middle', label: '중간 맞춤', hotkey: 'M' },
  { icon: 'bottom', label: '아래쪽 맞춤', hotkey: 'B' },
  { line: true },
  { icon: 'horizontal', label: '가로 간격을 동일하게', hotkey: 'H' },
  { icon: 'vertical', label: '세로 간격을 동일하게', hotkey: 'V' },
  { line: true },
  { label: '슬라이드에 맞춤', hotkey: 'A' },
  { label: '선택한 개체 맞춤', hotkey: 'O', checked: true },
  { line: true },
  { label: '눈금선 보기', hotkey: 'S' },
  { icon: 'grid', label: '눈금 설정', hotkey: 'G', more: true },
];

const shapes = [
  { label: '사과', x: 153, y: 271, tx: 36, ty: 63, fill: '#ff0000' },
  { label: '배', x: 337, y: 288, tx: 78, ty: 66, fill: '#4f81bd' },
  { label: '수박', x: 553, y: 271, tx: 126, ty: 63, fill: '#4f81bd' },
  { label: '복숭아', x: 746, y: 263, tx: 170, ty: 61, fill: '#4f81bd' },
];

/* ---------- parts ---------- */

const Command = ({ icon, children }) => (
  <CommandRow>
    {icon}
    <Ko>{children}</Ko>
    <CommandArrow><Arrow /></CommandArrow>
  </CommandRow>
);

const AlignMenu = () => (
  <Menu>
    {menuItems.map((item, i) =>
      item.line ? (
        <MenuLine key={i} />
      ) : (
        <MenuItem key={i}>
          <MenuIcon>
            {item.icon && <MenuDrawing name={item.icon} />}
            {item.checked && (
              <MenuCheck>
                <svg width="10" height="13" viewBox="0 0 10 13">
                  <path d="M1.500 7L4 11L8.500 1.500" fill="none" stroke="#1c2f7c" strokeWidth="1.700" />
                </svg>
              </MenuCheck>
            )}
          </MenuIcon>
          <Ko>{item.label}</Ko>
          <span>(<u>{item.hotkey}</u>){item.more && '...'}</span>
        </MenuItem>
      )
    )}
  </Menu>
);

const Header = () => (
  <TopArea>
    <TitleBar>
      <QuickAccess>
        <svg width="16" height="17" viewBox="0 0 16 17">
          <rect x=".7" y=".7" width="14.600" height="15.600" rx="1" fill="#fdeee6" stroke="#d3532a" strokeWidth="1.400" />
          <text x="3.500" y="13" fontSize="13" fontWeight="bold" fill="#d3461b">P</text>
        </svg>
        <QuickDivider $left={4} $right={7} />
        <svg width="15" height="15" viewBox="0 0 15 15">
          <path d="M.5 .5H14.500V14.500H2L.5 13Z" fill="#4c57b5" stroke="#343c8c" />
          <rect x="3" y="1" width="9" height="6" fill="#eef2fb" />
          <rect x="4" y="9" width="7" height="5" fill="#ccd3e8" />
          <rect x="8" y="10" width="2" height="4" fill="#343c8c" />
        </svg>
        <TrayItem $left={8}>
          <svg width="14" height="14" viewBox="0 0 14 14">
            <path d="M4 5.500C8 1.500 13 4 11 9C10.500 10.500 9.500 12 8 13" fill="none" stroke="#4879cf" strokeWidth="2.600" />
            <path d="M0 2V9.500H7.500Z" fill="#4879cf" />
          </svg>
        </TrayItem>
        <TrayItem $left={5}><Arrow color="#111" /></TrayItem>
        <TrayItem $left={8}>
          <svg width="13" height="13" viewBox="0 0 13 13">
            <path d="M4 2.500C1 4 1 9.500 4 11C8 13 11.500 10 11 6.500C10.800 5 10 4 9 2" fill="none" stroke="#a9a9a9" strokeWidth="2.200" />
            <path d="M0 1H6V6.500Z" fill="#a9a9a9" />
          </svg>
        </TrayItem>
        <QuickDivider $left={8} $right={3} />
        <svg width="7" height="8" viewBox="0 0 7 8"><path d="M0 1H7" stroke="#111" /><path d="M.5 4H6.500L3.500 7Z" fill="#111" /></svg>
      </QuickAccess>
      <DocTitle><Ko>프레젠테이션1</Ko>  -  Microsoft PowerPoint</DocTitle>
      <WindowButtons>
        <svg width="16" height="12" viewBox="0 0 16 12"><path d="M3 6.500H13" stroke="#111" /></svg>
        <svg width="16" height="12" viewBox="0 0 16 12">
          <path d="M3.500 3.500H10.500V10.500H3.500ZM5.500 3V1.500H12.500V8.500H11" fill="none" stroke="#111" />
        </svg>
        <svg width="16" height="12" viewBox="0 0 16 12"><path d="M3 1L13 11M13 1L3 11" stroke="#111" strokeWidth="1.200" /></svg>
      </WindowButtons>
    </TitleBar>
    <TabRow>
      <FileTab $width={56}><Ko>파일</Ko></FileTab>
      {tabs.map(([label, width]) => (
        <Tab key={label} $width={width}><Ko>{label}</Ko></Tab>
      ))}
      <RibbonCorner>
        <svg width="10" height="8" viewBox="0 0 10 8">
          <path d="M1 5L5 1L9 5V6.500L7.500 7L5 4.500L2.500 7L1 6.500Z" fill="#fff" stroke="#555" />
        </svg>
        <HelpBadge>?</HelpBadge>
      </RibbonCorner>
    </TabRow>
    <ContextTab>
      <ContextTitle><Ko>그리기 도구</Ko></ContextTitle>
      <ContextLabel><Ko>서식</Ko></ContextLabel>
    </ContextTab>
  </TopArea>
);

const FormatRibbon = () => (
  <Ribbon>
    <Group $width={249}>
      <GroupBody $left={5}>
        <Gallery $width={137}>
          <ShapeGrid>
            {shapeIcons.map((icon, i) => <ShapeIcon key={i}>{i < 2 ? <g stroke="none">{icon}</g> : icon}</ShapeIcon>)}
          </ShapeGrid>
          <ScrollSteps />
        </Gallery>
        <CommandList $left={6}>
          <Command icon={<EditShapeIcon />}>도형 편집</Command>
          <Command icon={<TextBoxIcon />}>텍스트 상자</Command>
        </CommandList>
      </GroupBody>
      <GroupFooter><Ko>도형 삽입</Ko></GroupFooter>
    </Group>
    <Group $width={523}>
      <GroupBody $left={6}>
        <Gallery $width={409}>
          <StyleRow>
            {outlineColors.map((color) => (
              <StyleSwatch key={color} $color={color}><Ko>가나다</Ko></StyleSwatch>
            ))}
          </StyleRow>
          <ScrollSteps />
        </Gallery>
        <CommandList $left={6}>
          <Command icon={<FillIcon />}>도형 채우기</Command>
          <Command icon={<PencilIcon bar="#4f81bd" />}>도형 윤곽선</Command>
          <Command icon={<EffectIcon />}>도형 효과</Command>
        </CommandList>
      </GroupBody>
      <GroupFooter $shift={18}><Ko>도형 스타일</Ko></GroupFooter>
      <Launcher><LauncherIcon /></Launcher>
    </Group>
    <Group $width={311}>
      <GroupBody $left={6}>
        <Gallery $width={185}>
          <WordArtRow>
            <WordArtLetter $fill="#f0ebdc" $stroke={1.5} $line="#2a5a9e">A</WordArtLetter>
            <WordArtLetter $fill="#fff" $stroke={3} $line="#cf3a38">A</WordArtLetter>
            <WordArtLetter $fill="#fff" $stroke={1} $line="#c4c4c4">A</WordArtLetter>
          </WordArtRow>
          <ScrollSteps />
        </Gallery>
        <CommandList $left={6}>
          <Command icon={<TextFillIcon />}>텍스트 채우기</Command>
          <Command icon={<PencilIcon text bar="#000" />}>텍스트 윤곽선</Command>
          <Command icon={<TextEffectIcon />}>텍스트 효과</Command>
        </CommandList>
      </GroupBody>
      <GroupFooter $shift={20}><span>WordArt <Ko>스타일</Ko></span></GroupFooter>
      <Launcher><LauncherIcon /></Launcher>
    </Group>
    <Group $width={289}>
      <GroupBody $left={7}>
        <LargeButton $width={58}>
          <LargeIcon><BringFrontIcon /></LargeIcon>
          <LargeCaption><Ko>앞으로</Ko></LargeCaption>
          <LargeCaption><Ko>가져오기</Ko><Arrow /></LargeCaption>
        </LargeButton>
        <LargeButton $width={53}>
          <LargeIcon><SendBackIcon /></LargeIcon>
          <LargeCaption><Ko>뒤로</Ko></LargeCaption>
          <LargeCaption><Ko>보내기</Ko><Arrow /></LargeCaption>
        </LargeButton>
        <LargeButton $width={41}>
          <LargeIcon><SelectPaneIcon /></LargeIcon>
          <LargeCaption><Ko>선택</Ko></LargeCaption>
          <LargeCaption><Ko>창</Ko></LargeCaption>
        </LargeButton>
        <LargeButton $width={42} $active>
          <LargeIcon><AlignIcon /></LargeIcon>
          <LargeCaption><Ko>맞춤</Ko></LargeCaption>
          <LargeCaption><Arrow /></LargeCaption>
          <AlignMenu />
        </LargeButton>
        <LargeButton $width={41}>
          <LargeIcon><GroupIcon /></LargeIcon>
          <LargeCaption><Ko>그룹</Ko></LargeCaption>
          <LargeCaption><Arrow /></LargeCaption>
        </LargeButton>
        <LargeButton $width={42}>
          <LargeIcon><RotateIcon /></LargeIcon>
          <LargeCaption><Ko>회전</Ko></LargeCaption>
          <LargeCaption><Arrow /></LargeCaption>
        </LargeButton>
      </GroupBody>
      <GroupFooter><Ko>정렬</Ko></GroupFooter>
    </Group>
    <Group $width={142}>
      <GroupBody $left={8}>
        <CommandList $left={0} $top={5}>
          <SizeRow>
            <HeightIcon />
            <SizeName>높이:</SizeName>
            <SizeBox>2.8 cm<Spinner /></SizeBox>
          </SizeRow>
          <SizeRow>
            <WidthIcon />
            <SizeName>너비:</SizeName>
            <SizeBox>3.8 cm<Spinner /></SizeBox>
          </SizeRow>
        </CommandList>
      </GroupBody>
      <GroupFooter $shift={20}><Ko>크기</Ko></GroupFooter>
      <Launcher><LauncherIcon /></Launcher>
    </Group>
  </Ribbon>
);

const SlidePane = () => (
  <SidePane>
    <PaneTabs>
      <PaneTab $width={72} $active><Ko>슬라이드</Ko></PaneTab>
      <PaneTab $width={72}><Ko>개요</Ko></PaneTab>
      <PaneClose>
        <svg width="9" height="8" viewBox="0 0 9 8"><path d="M1 .5L8 7.500M8 .5L1 7.500" stroke="#4c4c4c" strokeWidth="2" /></svg>
      </PaneClose>
    </PaneTabs>
    <ThumbRow $top={3} $active>
      <ThumbNumber>1</ThumbNumber>
      <Thumb>
        {shapes.map((s) => (
          <ThumbShape key={s.label} $x={s.tx} $y={s.ty} $fill={s.fill}>{s.label}</ThumbShape>
        ))}
      </Thumb>
    </ThumbRow>
    <ThumbRow $top={3}>
      <ThumbNumber>2</ThumbNumber>
      <Thumb>
        <ThumbTable>
          {Array.from({ length: 30 }, (_, i) => <ThumbCell key={i} />)}
        </ThumbTable>
      </Thumb>
    </ThumbRow>
  </SidePane>
);

const Editor = () => (
  <EditorColumn>
    <CanvasRow>
      <Canvas>
        <Slide>
          {shapes.map((s) => (
            <SlideShape key={s.label} $x={s.x} $y={s.y} $fill={s.fill}>
              {s.label}
              <SelectionFrame />
            </SlideShape>
          ))}
        </Slide>
      </Canvas>
      <ScrollBar>
        <ScrollArrow $height={17}><Arrow w={9} up color="#444" /></ScrollArrow>
        <ScrollThumb><Grip /><Grip /><Grip /><Grip /></ScrollThumb>
        <ScrollArrow $height={16}><Arrow w={9} color="#444" /></ScrollArrow>
        <ScrollExtras>
          <svg width="9" height="10" viewBox="0 0 9 10"><path d="M1 4.500L4.500 .5L8 4.500ZM1 9.500L4.500 5.500L8 9.500Z" fill="#000" /></svg>
          <svg width="9" height="10" viewBox="0 0 9 10"><path d="M1 .5L4.500 4.500L8 .5ZM1 5.500L4.500 9.500L8 5.500Z" fill="#000" /></svg>
        </ScrollExtras>
      </ScrollBar>
    </CanvasRow>
    <NotesGap />
    <NotesRow>
      <Notes><NotesText>여기에 슬라이드 노트의 내용을 입력하십시오</NotesText></Notes>
      <ScrollBar>
        <ScrollArrow $height={18}><Arrow w={9} up color="#8a9695" /></ScrollArrow>
        <ScrollArrow $height={28}><Arrow w={9} color="#8a9695" /></ScrollArrow>
      </ScrollBar>
    </NotesRow>
  </EditorColumn>
);

const Status = () => (
  <StatusBar>
    <StatusCell $width={89} $left={8}><Ko>슬라이드 </Ko>&nbsp;1/2</StatusCell>
    <StatusCell $width={89} $left={9}>"Office&nbsp;<Ko>테마</Ko>"</StatusCell>
    <StatusCell $width={87} $left={8}>
      <svg width="17" height="16" viewBox="0 0 17 16">
        <path d="M1 9L6 6L16 8L12 14L6 15Z" fill="#f2f5fa" stroke="#5d77a8" />
        <path d="M2 11L7 13L12 12" stroke="#5d77a8" fill="none" />
        <path d="M5 6L8 10L15 1" fill="none" stroke="#3c6cc9" strokeWidth="2.400" />
      </svg>
      <TrayItem $left={16}><Ko>한국어</Ko></TrayItem>
    </StatusCell>
    <StatusRight>
      <ViewButton $active>
        <svg width="13" height="11" viewBox="0 0 13 11">
          <path d="M.5 .5H12.500V10.500H.5ZM4.500 .5V10.500M4.500 7.500H12.500" fill="#fff" stroke="#555" />
          <rect x="6.500" y="2.500" width="4" height="3" fill="#ddd" stroke="#555" />
        </svg>
      </ViewButton>
      <ViewButton>
        <svg width="11" height="11" viewBox="0 0 11 11"><path d="M.5 .5H4.500V4H.5ZM6.500 .5H10.500V4H6.500ZM.5 6.500H4.500V10H.5ZM6.500 6.500H10.500V10H6.500Z" fill="#f2f2f2" stroke="#555" /></svg>
      </ViewButton>
      <ViewButton>
        <svg width="12" height="12" viewBox="0 0 12 12"><path d="M.5 1L6 2.500L11.500 1V9.500L6 11L.5 9.500ZM6 2.500V11" fill="#f2f2f2" stroke="#555" /><path d="M2 4L5 4.700M2 6L5 6.700M2 8L5 8.700M10 4L7 4.700M10 6L7 6.700M10 8L7 8.700" stroke="#777" strokeWidth=".8" /></svg>
      </ViewButton>
      <ViewButton>
        <svg width="11" height="12" viewBox="0 0 11 12"><path d="M0 1.500H11M1.500 1.500V6.500H9.500V1.500M5.500 6.500V10M2.500 10.500H8.500" fill="#f2f2f2" stroke="#555" strokeWidth="1.300" /></svg>
      </ViewButton>
      <ZoomValue>110%</ZoomValue>
      <TrayItem $left={-3}>
        <svg width="132" height="17" viewBox="0 0 132 17">
          <path d="M16 8H117" stroke="#8e949c" />
          <circle cx="8.500" cy="8.500" r="7.500" fill="#f2f3f4" stroke="#6d7178" />
          <circle cx="124.500" cy="8.500" r="7.500" fill="#f2f3f4" stroke="#6d7178" />
          <path d="M5 8.500H12M121 8.500H128M124.500 5V12" stroke="#333" strokeWidth="1.600" />
          <path d="M64.500 2.500H72.500V10L68.500 14L64.500 10Z" fill="#f4f5f6" stroke="#6d7178" />
        </svg>
      </TrayItem>
      <TrayItem $left={8}>
        <svg width="17" height="17" viewBox="0 0 17 17">
          <rect x=".5" y=".5" width="15" height="15" rx="2" fill="#e9eaec" stroke="#555" />
          <path d="M8 2V6M8 10V14M2 8H6M10 8H14M8 2L6.500 4M8 2L9.500 4M8 14L6.500 12M8 14L9.500 12M2 8L4 6.500M2 8L4 9.500M14 8L12 6.500M14 8L12 9.500" stroke="#444" fill="none" />
        </svg>
      </TrayItem>
    </StatusRight>
  </StatusBar>
);

const Tasks = () => (
  <TaskBar>
    <TaskSlot $width={47}>
      <svg width="14" height="16" viewBox="0 0 17 17" preserveAspectRatio="none"><path d="M0 2.500L7.500 1.500V8H0ZM8.500 1.400L17 0V8H8.500ZM0 9H7.500V15.500L0 14.500ZM8.500 9H17V17L8.500 15.700Z" fill="#fff" /></svg>
    </TaskSlot>
    <TaskSlot $before={1}>
      <svg width="17" height="17" viewBox="0 0 17 17"><circle cx="10.500" cy="6" r="5" fill="none" stroke="#fff" strokeWidth="1.300" /><path d="M7 10L1 16" stroke="#fff" strokeWidth="1.300" /></svg>
    </TaskSlot>
    <TaskSlot>
      <svg width="17" height="16" viewBox="0 0 17 16"><path d="M1.500 0V2.500H10.500V0M1.500 16V13.500H10.500V16M1.500 4.500H10.500V11.500H1.500ZM14.500 0V4M14.500 7V16" fill="none" stroke="#fff" /><rect x="13" y="4" width="3" height="3" fill="#fff" /></svg>
    </TaskSlot>
    <TaskSlot $before={3}>
      <svg width="24" height="24" viewBox="0 0 24 24">
        <rect width="24" height="24" fill="#fae100" />
        <path d="M12 4C6.500 4 3 7.400 3 11.200C3 14 4.700 16.200 7.500 17.400L6.700 21L10.700 18.300C16 18.800 21 15.800 21 11.200C21 7.400 17.500 4 12 4Z" fill="#391b1b" />
        <text x="12" y="13.400" fontSize="6" fontWeight="bold" textAnchor="middle" fill="#fae100">TALK</text>
      </svg>
    </TaskSlot>
    <TaskSlot $width={50}>
      <svg width="22" height="19" viewBox="0 0 22 19">
        <path d="M0 0H8L10 2H20V5H0Z" fill="#e0a020" />
        <rect y="3" width="22" height="15" fill="#ffd667" />
        <path d="M4 18.500V11H18V18.500H14.500V15H7.500V18.500Z" fill="#3d93dc" />
      </svg>
    </TaskSlot>
    <TaskSlot>
      <svg width="24" height="24" viewBox="0 0 24 24">
        <circle cx="12" cy="12" r="12" fill="#1763b5" />
        <path d="M1 8C4 1 11 -1 17 1.500C22 3.500 25 9 23.500 13C22 16.500 16.500 17 14 15C16 12 14 8 10 7.500C6 7 2.500 9 0.500 13Z" fill="url(#edgeFill)" />
        <path d="M9 11C7 16 12 21.500 20 20C17 23.500 12 24.500 9 23.500C4 21 4 13 9 11Z" fill="#0f4791" />
        <path d="M10.500 10.500C8 14 11 19 16 19C19 19 21.500 18 22.800 16.700C19 18.500 15 17.500 13.500 15.200C14.500 13.500 13 10.500 10.500 10.500Z" fill="#1c1b1a" />
      </svg>
    </TaskSlot>
    <TaskSlot $width={40} $before={5} $gap={5} $open>
      <svg width="24" height="24" viewBox="0 0 24 24">
        <path d="M20.500 13.500H9C9 19 15 20 16.500 16H20.500C18 24 4 23.500 4 13C4 2.500 21 2.500 20.500 13.500ZM9 10.800H16C16 7 9.500 7 9 10.800Z" fill="#5fc8f4" stroke="#1f86cf" strokeWidth=".8" />
        <path d="M5 21.500C-1 24 1 14 9 7C16 .5 24 -1 21.500 6" fill="none" stroke="#f6c930" strokeWidth="2" />
      </svg>
    </TaskSlot>
    <TaskSlot $active $open $gap={5}>
      <svg width="20" height="24" viewBox="0 0 20 24">
        <path d="M1 2L18 1V23L1 22Z" fill="#f3dcd0" stroke="#d9532a" strokeWidth="1.400" />
        <text x="3" y="17" fontSize="16" fontWeight="bold" fill="#d84a1f">P</text>
        <rect x="10.500" y="12" width="9" height="9" fill="#fff" stroke="#dd6a45" />
        <circle cx="15" cy="17" r="2.600" fill="#dd6a45" />
      </svg>
    </TaskSlot>
    <TaskSlot $width={40} $open>
      <svg width="24" height="25" viewBox="0 0 24 25">
        <path d="M10 5C3 6 0 12 1 18C2 23 8 24 11 23C14 22 12 18 15 17C19 16 22 14 20 9C18 5 14 4 10 5Z" fill="#cfe6f5" stroke="#8fb4d0" />
        <circle cx="6" cy="12" r="2" fill="#d9372c" />
        <circle cx="11" cy="8.500" r="2" fill="#53b84a" />
        <circle cx="5" cy="17" r="2" fill="#3b7fd6" />
        <circle cx="16" cy="9" r="1.800" fill="#f0b429" />
        <path d="M21 1L13 23" stroke="#d98a3c" strokeWidth="2.400" />
        <path d="M19 1L23 0L22 6L19 7Z" fill="#c59a6b" />
      </svg>
    </TaskSlot>
    <Tray>
      <svg width="16" height="16" viewBox="0 0 16 16" fill="none" stroke="#fff" strokeWidth="1.200">
        <circle cx="10.500" cy="3" r="2.600" /><circle cx="5" cy="8" r="2.600" />
        <path d="M1 15C1 9.500 9 9.500 9 15M8.500 8C11 5 14.500 7 14.500 10.500" />
      </svg>
      <TrayItem $left={21}>
        <svg width="12" height="7" viewBox="0 0 12 7"><path d="M.5 6.500L6 1L11.500 6.500" fill="none" stroke="#fff" strokeWidth="1.200" /></svg>
      </TrayItem>
      <TrayItem $left={11}>
        <svg width="16" height="14" viewBox="0 0 16 14">
          <path d="M.5 2.500H13.500V10.500H.5ZM14.500 4V9" fill="none" stroke="#fff" />
          <rect x="2" y="4" width="2" height="5" fill="#fff" />
          <circle cx="10.500" cy="9" r="4.500" fill="#0f8a27" />
          <path d="M10.500 6.500L12.500 9L10.500 11L8.500 9Z" stroke="#fff" fill="none" />
        </svg>
      </TrayItem>
      <TrayItem $left={9}>
        <svg width="14" height="14" viewBox="0 0 14 14" fill="none" stroke="#ccc" strokeWidth="1.200">
          <path d="M1 13C1 6 6 1 13 1M4 13C4 8 8 4 13 4M7 13C7 10 10 7 13 7" /><circle cx="11.500" cy="11.500" r="1" fill="#fff" />
        </svg>
      </TrayItem>
      <TrayItem $left={8}>
        <svg width="15" height="14" viewBox="0 0 15 14">
          <path d="M.5 4.500H3L7 1V12.500L3 9H.5ZM9.500 5L14 9.500M14 5L9.500 9.500" fill="none" stroke="#fff" />
        </svg>
      </TrayItem>
      <TrayItem $left={9}>
        <svg width="14" height="14" viewBox="0 0 14 14">
          <circle cx="7" cy="7" r="7" fill="#9c9a98" /><path d="M4 4L10 10M10 4L4 10" stroke="#222" strokeWidth="1.500" />
        </svg>
      </TrayItem>
      <Clock><Ko>오후</Ko> 9:36<br />2020-08-24</Clock>
      <TrayItem $left={16}>
        <svg width="25" height="25" viewBox="0 0 25 25">
          <path d="M1 3H17V15H8L5 18V15H1Z" fill="#fff" />
          <path d="M4 6.500H14M4 9.500H14M4 12.500H11" stroke="#222" />
          <circle cx="16.500" cy="18.500" r="7.500" fill="#2f2c2a" stroke="#777" />
          <text x="16.500" y="23" fontSize="12" fontWeight="600" textAnchor="middle" fill="#fff">1</text>
        </svg>
      </TrayItem>
      <ShowDesktop />
    </Tray>
  </TaskBar>
);

const App = () => (
  <>
    <GlobalStyle />
    <SharedDefs />
    <Window>
      <Header />
      <FormatRibbon />
      <WorkArea>
        <SlidePane />
        <Splitter />
        <Editor />
      </WorkArea>
      <Status />
      <Tasks />
    </Window>
  </>
);

export default App;
